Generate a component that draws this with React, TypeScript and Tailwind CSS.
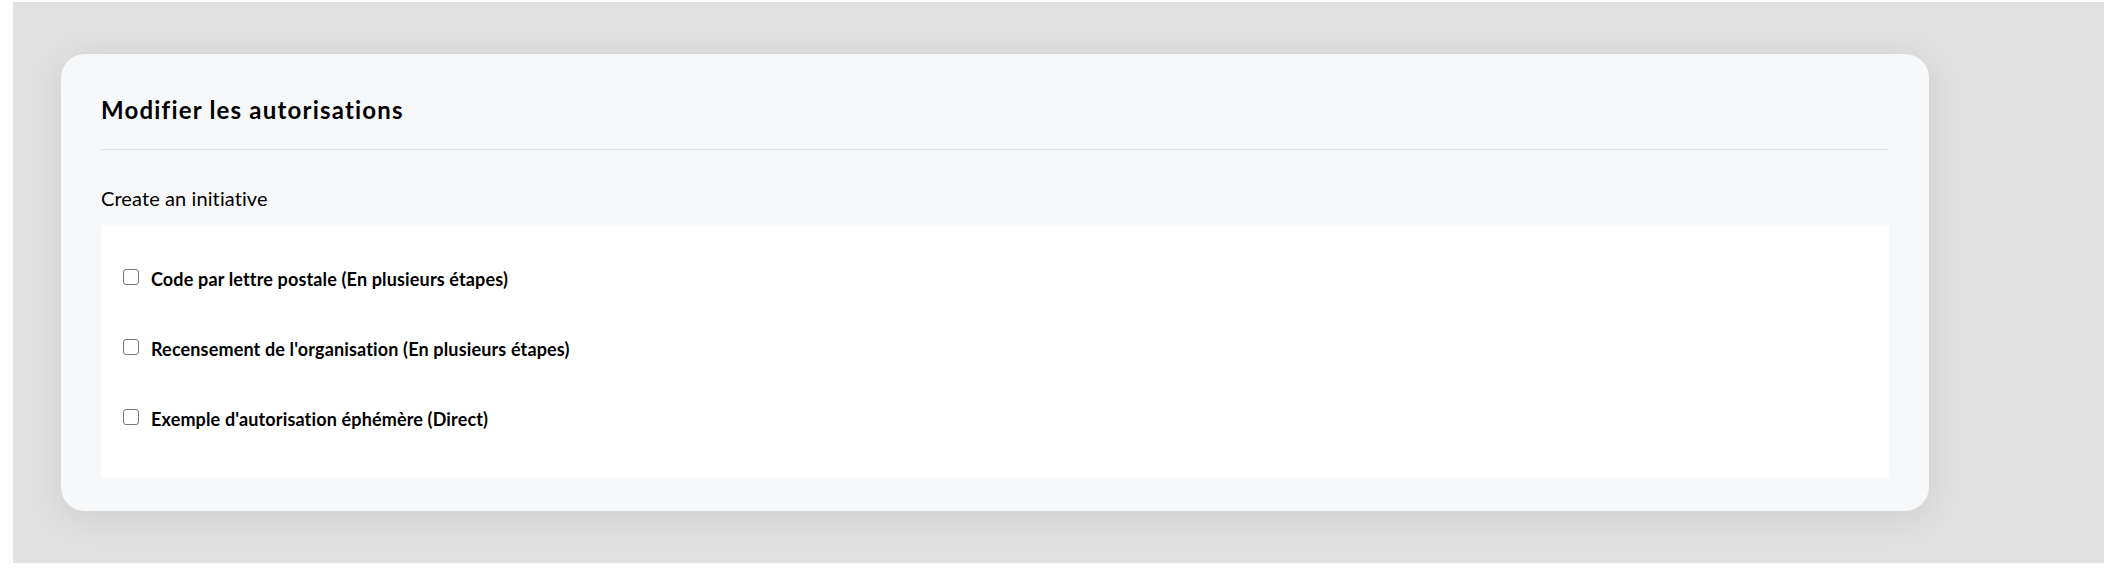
import React, { useState } from 'react';

const permissions = [
  { id: 'postal_letter', label: 'Code par lettre postale (En plusieurs étapes)' },
  { id: 'census', label: "Recensement de l'organisation (En plusieurs étapes)" },
  { id: 'ephemeral', label: "Exemple d'autorisation éphémère (Direct)" },
];

export default function App() {
  const [checked, setChecked] = useState<Record<string, boolean>>({});

  const toggle = (id: string) => {
    setChecked((prev) => ({ ...prev, [id]: !prev[id] }));
  };

  return (
    <div className="min-h-screen bg-white pl-[13px] pt-[2px] font-['Lato',sans-serif] text-black">
      <div className="h-[561px] bg-[#e1e1e1] pl-[48px] pt-[52px]">
        {/* Card */}
        <div className="w-[1868px] h-[457px] rounded-3xl bg-[#f7f8fa] px-10 pt-10 shadow-[0_6px_36px_rgba(0,0,0,0.09)]">
          <h2 className="text-[24px] leading-[32px] font-bold tracking-[1.2px]">Modifier les autorisations</h2>
          <div className="mt-[23px] h-px bg-[#e0e2e6]" />

          <h3 className="mt-[34px] text-[20px] leading-[28px] font-normal tracking-[0.1px]">Create an initiative</h3>

          {/* Options */}
          <div className="mt-[13px] h-[252px] bg-white pl-[22px] pt-[43px]">
            <div className="flex flex-col gap-[48px]">
              {permissions.map((p) => (
                <label key={p.id} className="flex items-start gap-3 cursor-pointer">
                  <input
                    type="checkbox"
                    checked={!!checked[p.id]}
                    onChange={() => toggle(p.id)}
                    className="mt-px h-4 w-4 shrink-0 appearance-none rounded-[3px] border border-[#7a7a7a] bg-white checked:bg-[#2b6cb0] checked:border-[#2b6cb0]"
                  />
                  <span className="text-[18px] leading-[22px] font-bold tracking-[0.15px]">{p.label}</span>
                </label>
              ))}
            </div>
          </div>
        </div>
      </div>
    </div>
  );
}
